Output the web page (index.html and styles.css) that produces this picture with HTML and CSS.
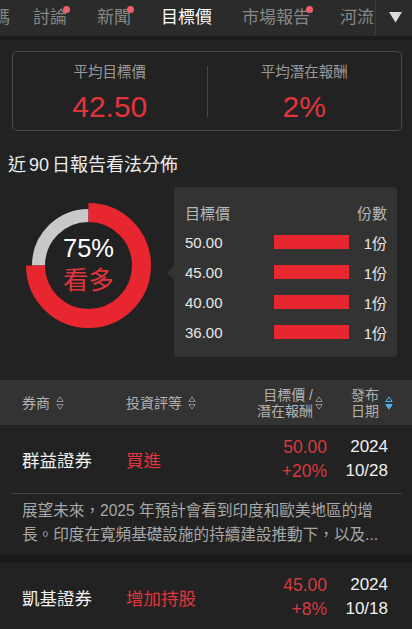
FILE: index.html
```html
<!DOCTYPE html>
<html lang="zh-Hant">
<head>
<meta charset="utf-8">
<title>目標價</title>
<link rel="stylesheet" href="styles.css">
</head>
<body>
<div class="page">
  <nav class="tabbar">
    <div class="tabs">
      <span class="tab first">籌碼</span>
      <span class="tab">討論<i class="dot"></i></span>
      <span class="tab">新聞<i class="dot"></i></span>
      <span class="tab active">目標價</span>
      <span class="tab">市場報告<i class="dot"></i></span>
      <span class="tab">河流</span>
    </div>
    <div class="more">
      <svg width="13" height="11" viewBox="0 0 13 11"><polygon points="0,0 13,0 6.5,10.5" fill="#dcdcdc"/></svg>
    </div>
  </nav>

  <section class="summary">
    <div class="stat">
      <div class="stat-label">平均目標價</div>
      <div class="stat-value">42.50</div>
    </div>
    <div class="vdiv"></div>
    <div class="stat">
      <div class="stat-label">平均潛在報酬</div>
      <div class="stat-value">2%</div>
    </div>
  </section>

  <h2 class="title">近<span class="num">90</span>日報告看法分佈</h2>

  <section class="dist">
    <div class="donut">
      <svg class="ring" width="131" height="131" viewBox="0 0 131 131">
        <path d="M 15.5 65.5 A 50 50 0 0 1 65.5 15.5" fill="none" stroke="#c9c9c9" stroke-width="13"/>
        <path d="M 65.5 12.5 A 53 53 0 1 1 12.5 65.5" fill="none" stroke="#e8262f" stroke-width="19"/>
      </svg>
      <div class="donut-text">
        <div class="pct">75%</div>
        <div class="view">看多</div>
      </div>
    </div>
    <div class="tip">
      <div class="tip-head"><span>目標價</span><span class="tip-right">份數</span></div>
      <div class="tip-row"><span>50.00</span><span class="bar"></span><span class="tip-right">1份</span></div>
      <div class="tip-row"><span>45.00</span><span class="bar"></span><span class="tip-right">1份</span></div>
      <div class="tip-row"><span>40.00</span><span class="bar"></span><span class="tip-right">1份</span></div>
      <div class="tip-row"><span>36.00</span><span class="bar"></span><span class="tip-right">1份</span></div>
    </div>
  </section>

  <div class="thead">
    <div class="c1 hcell">券商<svg class="sort" width="8" height="16" viewBox="0 0 8 16"><polygon points="0.8,6.5 4,1.8 7.2,6.5" fill="none" stroke="#8c8c8c" stroke-width="1"/><polygon points="0.8,9.5 4,14.2 7.2,9.5" fill="none" stroke="#8c8c8c" stroke-width="1"/></svg></div>
    <div class="c2 hcell">投資評等<svg class="sort" width="8" height="16" viewBox="0 0 8 16"><polygon points="0.8,6.5 4,1.8 7.2,6.5" fill="none" stroke="#8c8c8c" stroke-width="1"/><polygon points="0.8,9.5 4,14.2 7.2,9.5" fill="none" stroke="#8c8c8c" stroke-width="1"/></svg></div>
    <div class="c3 hcell"><span class="two r">目標價 /<br>潛在報酬</span><svg class="sort tight" width="8" height="16" viewBox="0 0 8 16"><polygon points="0.8,6.5 4,1.8 7.2,6.5" fill="none" stroke="#8c8c8c" stroke-width="1"/><polygon points="0.8,9.5 4,14.2 7.2,9.5" fill="none" stroke="#8c8c8c" stroke-width="1"/></svg></div>
    <div class="c4 hcell"><span class="two">發布<br>日期</span><svg class="sort" width="8" height="16" viewBox="0 0 8 16"><polygon points="0.8,6.5 4,1.8 7.2,6.5" fill="none" stroke="#4fb0ea" stroke-width="1"/><polygon points="0.8,9.5 4,14.2 7.2,9.5" fill="#4fb0ea" stroke="#4fb0ea" stroke-width="1"/></svg></div>
  </div>

  <article class="report">
    <div class="row-main">
      <div class="c1 broker">群益證券</div>
      <div class="c2 rating">買進</div>
      <div class="c3 target"><span>50.00</span><span>+20%</span></div>
      <div class="c4 date"><span>2024</span><span>10/28</span></div>
    </div>
    <div class="hr"></div>
    <p class="desc">展望未來，2025 年預計會看到印度和歐美地區的增<br>長。印度在寬頻基礎設施的持續建設推動下，以及...</p>
  </article>

  <div class="sep"></div>

  <article class="report">
    <div class="row-main">
      <div class="c1 broker">凱基證券</div>
      <div class="c2 rating">增加持股</div>
      <div class="c3 target"><span>45.00</span><span>+8%</span></div>
      <div class="c4 date"><span>2024</span><span>10/18</span></div>
    </div>
  </article>
</div>
</body>
</html>
```

FILE: styles.css
```css
* { box-sizing: border-box; }

html, body {
  margin: 0;
  padding: 0;
  background: #222222;
}

body {
  font-family: "Liberation Sans", "Noto Sans CJK TC", sans-serif;
  color: #eeeeee;
}

.page {
  width: 412px;
  height: 629px;
  overflow: hidden;
  background: #222222;
}

/* tab bar */
.tabbar {
  display: flex;
  height: 40px;
  background: #2b2b2b;
  border-bottom: 4px solid #1c1c1c;
}

.tabs {
  flex: 0 0 399px;
  display: flex;
  align-items: center;
  gap: 30px;
  overflow: hidden;
  white-space: nowrap;
  margin-left: -24px;
  padding-bottom: 1px;
}

.tab {
  position: relative;
  flex: none;
  font-size: 17px;
  line-height: 24px;
  color: #878787;
}

.tab.first { margin-right: -7px; }

.tab.active { color: #ffffff; }

.dot {
  position: absolute;
  right: -3px;
  top: 0px;
  width: 7px;
  height: 7px;
  border-radius: 50%;
  background: #f0606a;
}

.more {
  flex: 1;
  display: flex;
  align-items: center;
  justify-content: center;
  border-left: 1px solid #383838;
  padding-left: 2px;
  padding-bottom: 2px;
}

/* summary */
.summary {
  display: flex;
  height: 80px;
  margin: 11px 10px 0 12px;
  border: 1px solid #4a4a4a;
  border-radius: 5px;
}

.stat {
  flex: 1;
  display: flex;
  flex-direction: column;
  align-items: center;
  padding-top: 10px;
}

.stat-label {
  font-size: 14.5px;
  line-height: 20px;
  color: #9a9a9a;
}

.stat-value {
  margin-top: 8px;
  font-size: 30px;
  line-height: 34px;
  color: #e2343d;
}

.vdiv {
  width: 1px;
  height: 51px;
  margin-top: 14px;
  background: #474747;
}

/* title */
.title {
  margin: 21px 0 0 8px;
  font-size: 18px;
  line-height: 26px;
  font-weight: normal;
  color: #ececec;
}

.num { margin: 0 3px; }

/* distribution */
.dist {
  display: flex;
  align-items: flex-start;
  margin-top: 9px;
  padding-left: 23px;
}

.donut {
  display: grid;
  margin-top: 13px;
}

.ring, .donut-text { grid-area: 1 / 1; }

.donut-text {
  align-self: center;
  justify-self: center;
  text-align: center;
  padding-bottom: 3px;
}

.pct {
  font-size: 25.5px;
  line-height: 32px;
  color: #ffffff;
}

.view {
  font-size: 25.5px;
  line-height: 32px;
  color: #e2343d;
}

.tip {
  position: relative;
  width: 223px;
  margin-left: 20px;
  padding: 10px 10px 10px 11px;
  background: #333333;
  border-radius: 4px;
  font-size: 15px;
}

.tip::before {
  content: "";
  position: absolute;
  left: -7px;
  top: 79px;
  border-top: 7px solid transparent;
  border-bottom: 7px solid transparent;
  border-right: 7px solid #333333;
}

.tip-head, .tip-row {
  display: grid;
  grid-template-columns: 89px 75px 1fr;
  align-items: center;
  height: 30px;
}

.tip-head {
  grid-template-columns: 1fr 1fr;
  color: #b8b8b8;
}

.tip-row { color: #e8e8e8; }

.tip-right { text-align: right; }

.bar {
  display: block;
  height: 14px;
  background: #e8262f;
}

/* table header */
.thead {
  display: flex;
  align-items: center;
  height: 45px;
  margin-top: 23px;
  padding-left: 22px;
  background: #333333;
  font-size: 14px;
  color: #b2b2b2;
}

.c1 { width: 104px; }
.c2 { width: 110px; }
.c3 { width: 91px; justify-content: flex-end; }
.c4 { width: 66px; justify-content: flex-end; }

.hcell {
  display: flex;
  align-items: center;
  line-height: 16px;
}

.hcell .sort { margin-left: 6px; flex: none; }
.hcell .sort.tight { margin-left: 2px; }
.thead .c3 { padding-right: 4px; }

.two { display: block; }
.two.r { text-align: right; }

/* report rows */
.report { background: #222222; }

.row-main {
  display: flex;
  align-items: center;
  height: 68px;
  padding-left: 22px;
  font-size: 17.5px;
}

.broker { color: #f0f0f0; }
.rating { color: #e2343d; }

.target, .date {
  display: flex;
  flex-direction: column;
  align-items: flex-end;
  line-height: 24px;
}

.target { color: #d9393f; }
.date { color: #f0f0f0; padding-right: 5px; font-size: 17px; }

.hr {
  height: 1px;
  margin: 0 10px 0 12px;
  background: #454545;
}

.desc {
  margin: 0;
  padding: 5px 10px 9px 22px;
  font-size: 15.6px;
  line-height: 23.5px;
  color: #a8a8a8;
  white-space: nowrap;
  overflow: hidden;
}

.sep {
  height: 8px;
  background: #1a1a1a;
}
```
